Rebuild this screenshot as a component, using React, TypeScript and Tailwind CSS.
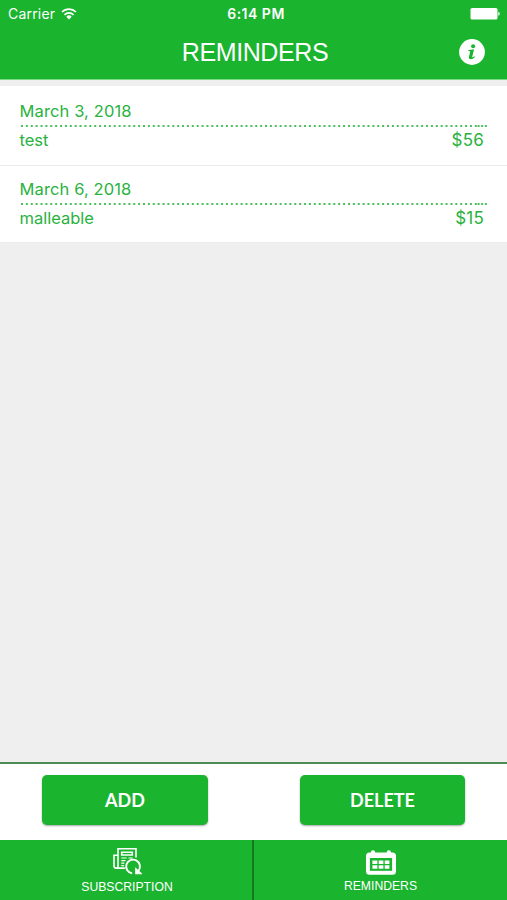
import React from 'react';

const reminders = [
  { date: 'March 3, 2018', name: 'test', price: '$56' },
  { date: 'March 6, 2018', name: 'malleable', price: '$15' },
];

const WifiIcon = () => (
  <svg className="ml-[6px] h-[12px] w-[16px]" viewBox="0 0 16 12" fill="none" stroke="#fff" strokeWidth="1.7">
    <path d="M1 4a10 10 0 0 1 14 0" />
    <path d="M3.5 6.8a6.4 6.4 0 0 1 9 0" />
    <path d="M8 11.4 5.3 8.7a3.8 3.8 0 0 1 5.4 0z" fill="#fff" stroke="none" />
  </svg>
);

const BatteryIcon = () => (
  <svg className="h-[12px] w-[30px]" viewBox="0 0 30 12" fill="#fff">
    <rect x="0.5" y="0" width="27" height="11.5" rx="1.6" />
    <path d="M28.3 3.8c1.9.5 1.9 3.5 0 4z" />
  </svg>
);

const InfoIcon = () => (
  <svg className="h-[26px] w-[26px]" viewBox="0 0 26 26">
    <circle cx="13" cy="13" r="12.9" fill="#fff" />
    <circle cx="14.1" cy="7.2" r="2" fill="#1ab42f" />
    <path
      d="M9.4 11.1c1.6-.1 3.5-.5 5.6-.8l-1.7 7.3c-.2.9.3 1 1 .5l1.1-.8.5.7c-1.3 1.5-2.9 2.3-4.2 2.2-1.5-.1-2-1.1-1.7-2.5l1.1-4.7c.1-.7-.3-1-1.7-1z"
      fill="#1ab42f"
    />
  </svg>
);

const SubscriptionIcon = () => (
  <svg className="h-[28px] w-[29px]" viewBox="0 0 29 28" fill="none" stroke="#fff" strokeWidth="1.6">
    <path d="M11.8 21.1H3.2c-1.4 0-2.2-.9-2.2-2.2V8.2h3.8" />
    <path d="M5 19.5V1.8h18v8.6M5 19.3c0 1-.7 1.8-1.7 1.8" />
    <path d="M8.7 5.2h10.6v2.8H8.7z" />
    <path d="M8.3 11h5.4M8.3 13.6h4.2M8.3 16.2h3M8.3 18.7h2.8M15.5 11h4.2" strokeWidth="1.2" />
    <path d="M19.2 26.4a6.9 6.9 0 1 1 6.3-2.6" strokeWidth="1.9" />
    <path d="M22.8 21.6v5h5.4z" fill="#fff" strokeWidth="1.2" />
  </svg>
);

const CalendarIcon = () => (
  <svg className="h-[25px] w-[30px]" viewBox="0 0 30 25">
    <rect x="4.9" y="0.3" width="4.2" height="6" rx="2" fill="#fff" />
    <rect x="20.7" y="0.3" width="4.2" height="6" rx="2" fill="#fff" />
    <rect x="0" y="2.5" width="30" height="22.3" rx="3.5" fill="#fff" />
    <rect x="3.9" y="8" width="22.2" height="12.8" fill="#1ab42f" />
    <path
      d="M6.4 10.4h5v3.5h-5zM12.7 10.4h4.7v3.5h-4.7zM18.7 10.4h4.7v3.5h-4.7zM6.4 15.2h5v3.5h-5zM12.7 15.2h4.7v3.5h-4.7zM18.7 15.2h4.7v3.5h-4.7z"
      fill="#fff"
    />
  </svg>
);

const DottedLine = () => (
  <svg className="-mr-[3px] h-[2px] w-[468px]" viewBox="0 0 468 2">
    <path d="M1 1h456" stroke="#4cc05e" strokeWidth="2" strokeDasharray="2 2.88" />
    <path d="M457.6 1h9.4" stroke="#4cc05e" strokeWidth="2" strokeDasharray="2 1.6" />
  </svg>
);

const App = () => {
  return (
    <div className="flex h-[900px] w-[507px] flex-col overflow-hidden bg-[#efefef] font-['Inter',sans-serif]">
      {/* Header */}
      <header className="h-[80px] shrink-0 border-b border-[#7cdd87] bg-[#1ab42f] text-white">
        <div className="grid h-[27px] grid-cols-3 items-center pr-[7px] pl-[8px] text-[14px]">
          <div className="flex items-center">
            <span className="tracking-[0.2px]">Carrier</span>
            <WifiIcon />
          </div>
          <span className="pl-[4px] text-center text-[14px] font-semibold tracking-[0.5px]">6:14 PM</span>
          <div className="flex justify-end">
            <BatteryIcon />
          </div>
        </div>
        <div className="grid h-[50px] grid-cols-[48px_1fr_48px] items-center">
          <h1 className="col-start-2 pl-[3px] text-center font-['Liberation_Sans',sans-serif] text-[25px] leading-[50px] tracking-[-0.4px]">
            REMINDERS
          </h1>
          <InfoIcon />
        </div>
      </header>

      {/* Reminder list */}
      <main className="flex-1 pt-[6px]">
        {reminders.map((item) => (
          <div
            key={item.date}
            className="h-[80px] border-b border-[#ebebeb] bg-white px-[20px] pt-[14px] text-[16.5px] leading-[22px] text-[#29b23e] last:h-[77px] last:pt-[12px]"
          >
            <div className="-ml-[0.5px] tracking-[0.12px]">{item.date}</div>
            <div className="mt-[3px]">
              <DottedLine />
            </div>
            <div className="mt-[2px] flex justify-between pr-[3px]">
              <span className="-ml-[0.5px]">{item.name}</span>
              <span className="text-[17px] tracking-[0.2px]">{item.price}</span>
            </div>
          </div>
        ))}
      </main>

      {/* Actions */}
      <div className="flex h-[78px] shrink-0 justify-between border-t-2 border-[#4d8b55] bg-white px-[42px] pt-[11px] font-['Lato',sans-serif] text-[18px] font-bold text-white">
        <button className="h-[50px] w-[166px] rounded-[5px] bg-[#1ab42f] shadow-[0_1px_2px_rgba(0,0,0,0.35)]">ADD</button>
        <button className="h-[50px] w-[165px] rounded-[5px] bg-[#1ab42f] shadow-[0_1px_2px_rgba(0,0,0,0.35)]">DELETE</button>
      </div>

      {/* Tab bar */}
      <nav className="flex h-[60px] shrink-0 bg-[#1ab42f] font-['Liberation_Sans',sans-serif] text-[12.2px] leading-[14px] text-white">
        <div className="flex w-[254px] flex-col items-center border-r-2 border-[#117a20] pt-[7px] pl-[2px]">
          <SubscriptionIcon />
          <span className="mt-[5px]">SUBSCRIPTION</span>
        </div>
        <div className="flex flex-1 flex-col items-center pt-[10px]">
          <CalendarIcon />
          <span className="mt-[4px]">REMINDERS</span>
        </div>
      </nav>
    </div>
  );
};

export default App;
